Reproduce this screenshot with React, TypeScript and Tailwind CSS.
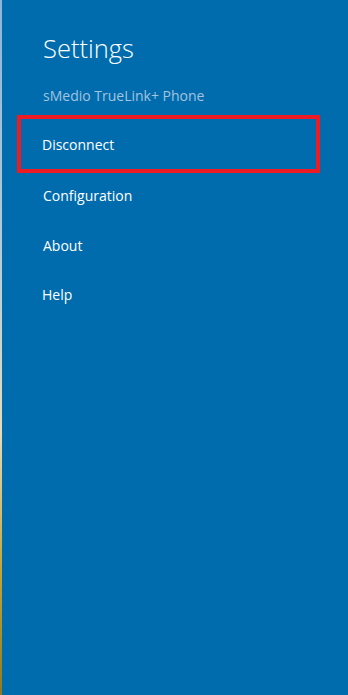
import React from "react";

export default function App() {
  const font = { fontFamily: '"Open Sans", "Noto Sans", sans-serif' };
  return (
    <div className="flex h-[695px] w-[348px] overflow-hidden bg-[#006cae]" style={font}>
      <div className="h-full w-[2px] shrink-0 bg-[linear-gradient(to_bottom,#8cb6da_0%,#b9cfd8_40%,#e4dcbc_62%,#c2a63a_82%,#8f7a1e_100%)]" />
      <div className="flex flex-1 flex-col">
        <h1 className="ml-[41px] mt-[32px] text-[25.5px] font-light leading-[32px] text-white">
          Settings
        </h1>
        <div className="ml-[41px] mt-[22px] text-[14px] leading-[20px] text-[#a3c3de]">
          sMedio TrueLink+ Phone
        </div>
        <div className="ml-[15px] mt-[9px] flex h-[58px] w-[303px] items-center border-[4px] border-[#ed1c24] pl-[21px] text-[14px] text-white">
          Disconnect
        </div>
        <div className="ml-[41px] mt-[13px] text-[14px] leading-[20px] text-white">Configuration</div>
        <div className="ml-[41px] mt-[30px] text-[14px] leading-[20px] text-white">About</div>
        <div className="ml-[40px] mt-[29px] text-[14px] leading-[20px] text-white">Help</div>
      </div>
    </div>
  );
}
